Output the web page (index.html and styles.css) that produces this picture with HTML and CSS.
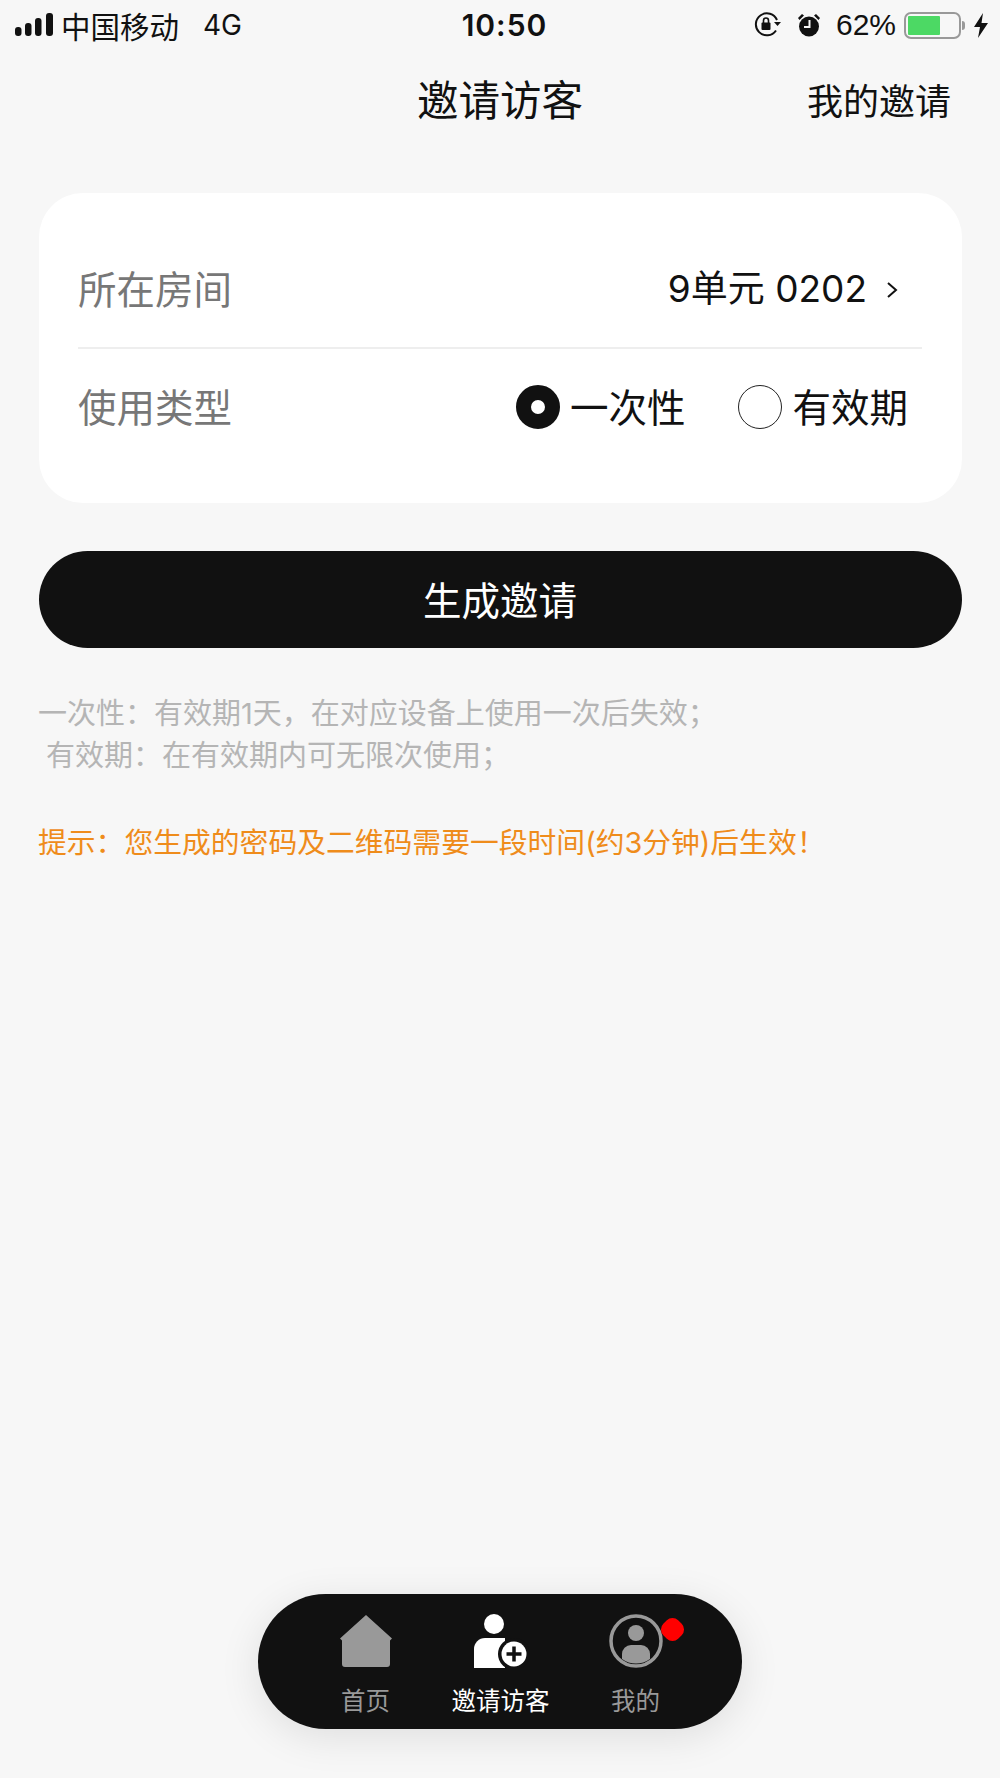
FILE: index.html
```html
<!DOCTYPE html>
<html lang="zh-CN">
<head>
<meta charset="utf-8">
<title>邀请访客</title>
<link rel="stylesheet" href="styles.css">
</head>
<body>
<div class="page">
  <header class="status">
    <div class="status-left">
      <svg class="signal" width="38" height="24" viewBox="0 0 38 24"><rect x="0" y="14" width="6.5" height="9" rx="3"/><rect x="10" y="10" width="6.5" height="13" rx="3"/><rect x="20" y="5" width="6.5" height="18" rx="3"/><rect x="31" y="0" width="7" height="23" rx="3"/></svg>
      <span class="carrier">中国移动</span>
      <span class="net">4G</span>
    </div>
    <div class="time">10:50</div>
    <div class="status-right">
      <svg class="lock" width="28" height="26" viewBox="0 0 28 26"><path d="M22 18.500A11 11 0 1 1 23 8" fill="none" stroke="#111" stroke-width="2"/><path d="M20 10h7l-3.500 4z" fill="#111"/><rect x="7.500" y="10.500" width="9" height="7.500" rx="1" fill="#111"/><path d="M9.500 11V8.500a2.500 2.500 0 0 1 5 0V11" fill="none" stroke="#111" stroke-width="1.600"/></svg>
      <svg class="alarm" width="24" height="24" viewBox="0 0 24 24"><circle cx="12" cy="13.500" r="10" fill="#111"/><path d="M1 5l4-4 2 1.500-4.500 4.500zM23 5l-4-4-2 1.500 4.500 4.500z" fill="#111"/><path d="M12.500 7v7H7" fill="none" stroke="#f7f7f7" stroke-width="2"/></svg>
      <span class="pct">62%</span>
      <div class="battery"><div class="battery-fill"></div></div>
      <div class="battery-nub"></div>
      <svg class="bolt" width="14" height="25" viewBox="0 0 14 25"><path d="M9 0L0 14h6l-2 11 10-15H7.500z" fill="#111"/></svg>
    </div>
  </header>

  <nav class="navbar">
    <h1 class="nav-title">邀请访客</h1>
    <a class="nav-link">我的邀请</a>
  </nav>

  <section class="card">
    <div class="row row-room">
      <span class="label">所在房间</span>
      <div class="value">
        <span>9单元 0202</span>
        <svg class="chev" width="12" height="18" viewBox="0 0 12 18"><path d="M2 2l8 7-8 7" fill="none" stroke="#111" stroke-width="2"/></svg>
      </div>
    </div>
    <div class="row row-type">
      <span class="label">使用类型</span>
      <div class="options">
        <div class="option"><span class="radio radio-on"></span><span>一次性</span></div>
        <div class="option"><span class="radio"></span><span>有效期</span></div>
      </div>
    </div>
  </section>

  <button class="primary">生成邀请</button>

  <div class="notes">
    <p class="note">一次性：有效期1天，在对应设备上使用一次后失效；</p>
    <p class="note note-indent">有效期：在有效期内可无限次使用；</p>
    <p class="tip">提示：您生成的密码及二维码需要一段时间(约3分钟)后生效！</p>
  </div>

  <footer class="tabbar">
    <div class="tab">
      <svg class="tab-icon" width="54" height="54" viewBox="0 0 54 54"><path d="M27 1L53 24.500 51 26.500V50a3 3 0 0 1-3 3H6a3 3 0 0 1-3-3V26.500L1 24.500z" fill="#999"/></svg>
      <span>首页</span>
    </div>
    <div class="tab tab-active">
      <svg class="tab-icon person-plus" width="56" height="54" viewBox="0 0 56 54"><circle cx="20" cy="10" r="10" fill="#fff"/><path d="M0 53V35a11 11 0 0 1 11-11h20v30H0z" fill="#fff"/><circle cx="40" cy="40" r="16" fill="#111"/><circle cx="40" cy="40" r="12.500" fill="#fff"/><path d="M40 32.500v15M32.500 40h15" stroke="#111" stroke-width="3.500" fill="none"/></svg>
      <span>邀请访客</span>
    </div>
    <div class="tab">
      <svg class="tab-icon" width="54" height="54" viewBox="0 0 54 54"><circle cx="27" cy="27" r="25" fill="none" stroke="#999" stroke-width="3.500"/><circle cx="27" cy="19" r="8" fill="#999"/><path d="M13 45V40a9 9 0 0 1 9-9h10a9 9 0 0 1 9 9v5a24 24 0 0 1-28 0z" fill="#999"/></svg>
      <span>我的</span>
      <span class="badge"></span>
    </div>
  </footer>
</div>
</body>
</html>
```
FILE: styles.css
```css
* { box-sizing: border-box; }
html, body { margin: 0; padding: 0; }
body {
  background: #f7f7f7;
  color: #111;
  font-family: Inter, "Noto Sans CJK SC", sans-serif;
}
.page {
  width: 1000px;
  height: 1778px;
  display: flex;
  flex-direction: column;
  overflow: hidden;
}
.status {
  height: 50px;
  padding: 0 12px 0 15px;
  display: grid;
  grid-template-columns: 1fr auto 1fr;
  align-items: center;
}
.status-left, .status-right { display: flex; align-items: center; }
.status-right { justify-content: flex-end; }
.signal { fill: #111; margin-right: 8px; }
.carrier { font-size: 29.500px; }
.net { margin-left: 24px; font-size: 28px; font-family: Inter, sans-serif; }
.time { font-size: 30px; font-weight: 600; letter-spacing: 1px; margin-left: 6px; }
.lock { margin-right: 15px; }
.alarm { margin-right: 15px; }
.pct { font-family: "Liberation Sans", sans-serif; font-size: 30px; margin-right: 8px; }
.battery {
  width: 57px;
  height: 27px;
  border: 2px solid #999;
  border-radius: 7px;
  padding: 2px;
}
.battery-fill { width: 32px; height: 100%; background: #4cd964; border-radius: 1px; }
.battery-nub { width: 3px; height: 9px; background: #999; border-radius: 0 3px 3px 0; margin-left: 1px; margin-right: 9px; }
.navbar {
  height: 100px;
  position: relative;
  display: flex;
  align-items: center;
  justify-content: center;
}
.nav-title { margin: 4px 0 0; font-size: 41.500px; font-weight: 400; line-height: 1; }
.nav-link { position: absolute; right: 49px; top: 32px; font-size: 36px; line-height: 40px; }
.card {
  margin: 43px 38.500px 0;
  height: 310px;
  background: #fff;
  border-radius: 44px;
  padding: 0 39.500px;
}
.row { display: flex; align-items: center; justify-content: space-between; }
.row-room { height: 156px; padding-top: 34px; border-bottom: 2px solid #eee; }
.row-type { height: 115px; padding-bottom: 4px; }
.label { font-size: 38.500px; color: #777; }
.value { display: flex; align-items: center; font-size: 37px; margin-right: 24px; line-height: 50px; margin-top: 4px; }
.chev { margin-left: 19px; margin-top: 2px; }
.options { display: flex; align-items: center; gap: 53px; margin-right: 14px; font-size: 38.500px; }
.option { display: flex; align-items: center; gap: 10px; }
.radio {
  width: 44px;
  height: 44px;
  margin-top: 4px;
  border-radius: 50%;
  border: 1.500px solid #222;
  background: #fff;
}
.radio-on { border: 15px solid #111; }
.primary {
  display: block;
  margin: 48px 38.500px 0;
  width: 923px;
  height: 97px;
  border: 0;
  padding: 0 0 4px;
  border-radius: 49px;
  background: #111;
  color: #fff;
  font-family: inherit;
  font-size: 38.500px;
}
.notes { margin: 45px 38px 0; }
.note, .tip { margin: 0; line-height: 42px; white-space: nowrap; }
.note { color: #b5b5b5; font-size: 29px; }
.note-indent { padding-left: 8px; }
.tip { color: #ef8c1b; margin-top: 45px; font-size: 28.800px; }
.tabbar {
  margin: auto auto 49px;
  width: 484px;
  height: 135px;
  background: #111;
  border-radius: 68px;
  box-shadow: 0 8px 40px rgba(0, 0, 0, .1);
  display: flex;
  justify-content: center;
  padding-top: 20px;
  padding-left: 1px;
}
.tab {
  width: 135px;
  display: flex;
  flex-direction: column;
  align-items: center;
  color: #999;
  font-size: 24.500px;
  line-height: 30px;
  position: relative;
}
.tab-icon { margin-bottom: 18px; display: block; }
.person-plus { margin-left: 2px; }
.tab-active { color: #fff; }
.badge {
  position: absolute;
  left: 94px;
  top: 5px;
  width: 21px;
  height: 21px;
  background: #f00;
  border-radius: 8px;
  transform: rotate(45deg);
}
```
